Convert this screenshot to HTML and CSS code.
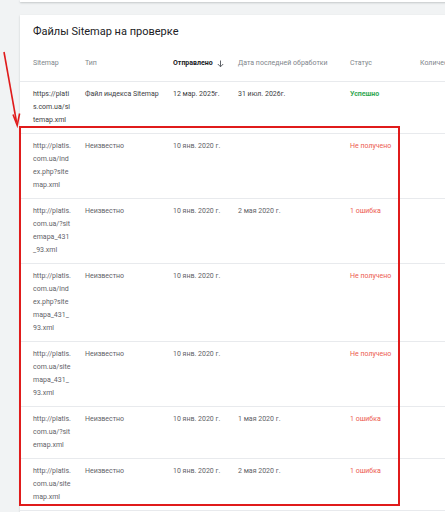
FILE: index.html
```html
<!DOCTYPE html>
<html lang="ru">
<head>
    <meta charset="utf-8">
    <title>Файлы Sitemap</title>
    <link rel="stylesheet" href="styles.css">
</head>
<body>
<div class="page">
    <div class="topCard"></div>
    <div class="card">
        <h2 class="card__title">Файлы Sitemap на проверке</h2>
        <div class="table">
            <div class="row row_head">
                <div class="cell">Sitemap</div>
                <div class="cell">Тип</div>
                <div class="cell cell_sorted">Отправлено
                    <svg class="sortIcon" width="7" height="8" viewBox="0 0 7 8">
                        <path d="M3.5 0.5v6.5M0.8 4l2.7 2.8L6.2 4" fill="none" stroke="#5f6368" stroke-width="1"/>
                    </svg>
                </div>
                <div class="cell">Дата последней обработки</div>
                <div class="cell">Статус</div>
                <div class="cell">Количес</div>
            </div>
            <div class="row row_dark">
                <div class="cell">https://plati<br>s.com.ua/si<br>temap.xml</div>
                <div class="cell">Файл индекса Sitemap</div>
                <div class="cell">12 мар. 2025г.</div>
                <div class="cell">31 июл. 2026г.</div>
                <div class="cell status_ok">Успешно</div>
                <div class="cell"></div>
            </div>
            <div class="row">
                <div class="cell">http://platis.<br>com.ua/ind<br>ex.php?site<br>map.xml</div>
                <div class="cell">Неизвестно</div>
                <div class="cell">10 янв. 2020 г.</div>
                <div class="cell"></div>
                <div class="cell status_err">Не получено</div>
                <div class="cell"></div>
            </div>
            <div class="row">
                <div class="cell">http://platis.<br>com.ua/?sit<br>emapa_431<br>_93.xml</div>
                <div class="cell">Неизвестно</div>
                <div class="cell">10 янв. 2020 г.</div>
                <div class="cell">2 мая 2020 г.</div>
                <div class="cell status_err">1 ошибка</div>
                <div class="cell"></div>
            </div>
            <div class="row">
                <div class="cell">http://platis.<br>com.ua/ind<br>ex.php?site<br>mapa_431_<br>93.xml</div>
                <div class="cell">Неизвестно</div>
                <div class="cell">10 янв. 2020 г.</div>
                <div class="cell"></div>
                <div class="cell status_err">Не получено</div>
                <div class="cell"></div>
            </div>
            <div class="row">
                <div class="cell">http://platis.<br>com.ua/site<br>mapa_431_<br>93.xml</div>
                <div class="cell">Неизвестно</div>
                <div class="cell">10 янв. 2020 г.</div>
                <div class="cell"></div>
                <div class="cell status_err">Не получено</div>
                <div class="cell"></div>
            </div>
            <div class="row">
                <div class="cell">http://platis.<br>com.ua/?sit<br>emap.xml</div>
                <div class="cell">Неизвестно</div>
                <div class="cell">10 янв. 2020 г.</div>
                <div class="cell">1 мая 2020 г.</div>
                <div class="cell status_err">1 ошибка</div>
                <div class="cell"></div>
            </div>
            <div class="row">
                <div class="cell">http://platis.<br>com.ua/site<br>map.xml</div>
                <div class="cell">Неизвестно</div>
                <div class="cell">10 янв. 2020 г.</div>
                <div class="cell">2 мая 2020 г.</div>
                <div class="cell status_err">1 ошибка</div>
                <div class="cell"></div>
            </div>
        </div>
    </div>

    <!-- пометки поверх скриншота -->
    <svg class="arrow" width="24" height="80" viewBox="0 0 24 80">
        <path d="M4 2L16.5 72" stroke="#e01b1b" stroke-width="1.6" fill="none"/>
        <path d="M13 64.5L17.2 75.5L19.6 63.5" stroke="#e01b1b" stroke-width="1.6" fill="none"/>
    </svg>
    <div class="highlight"></div>
</div>
</body>
</html>
```

FILE: styles.css
```css
body {
    margin: 0;
    padding: 0;
    background: #f1f3f4;
    font-family: Roboto, 'Noto Sans', sans-serif;
    overflow: hidden;
}

.page {
    position: relative;
    width: 445px;
    height: 512px;
    overflow: hidden;
}

.topCard {
    margin-left: 20px;
    width: 600px;
    height: 2px;
    background: #fff;
    box-shadow: 0 1px 2px rgba(60, 64, 67, 0.25);
}

.card {
    margin: 13px 0 0 20px;
    width: 600px;
    height: 520px;
    background: #fff;
    box-shadow: 0 1px 2px rgba(60, 64, 67, 0.2);
}

.card__title {
    margin: 0;
    padding: 10px 13px 0;
    font-size: 11px;
    line-height: 14px;
    font-weight: 400;
    color: #202124;
}

.row {
    display: grid;
    grid-template-columns: 52px 88px 65px 112px 70px 1fr;
    padding: 6px 0 6px 13px;
    border-bottom: 1px solid #e8eaed;
    font-size: 7px;
    line-height: 13px;
    color: #5f6368;
}

.row_head {
    padding: 18px 0 11px 13px;
    color: #80868b;
}

.row_dark {
    color: #3c4043;
}

.cell {
    white-space: nowrap;
}

.cell_sorted {
    color: #202124;
    font-weight: 700;
    display: flex;
    align-items: center;
    gap: 4px;
}

.sortIcon {
    flex-shrink: 0;
}

.status_ok {
    color: #34a853;
    font-weight: 700;
}

.status_err {
    color: #ec5b4f;
}

.arrow {
    position: absolute;
    left: 0;
    top: 50px;
}

.highlight {
    position: absolute;
    left: 19px;
    top: 126px;
    width: 377px;
    height: 376px;
    border: 2px solid #e01b1b;
}
```
